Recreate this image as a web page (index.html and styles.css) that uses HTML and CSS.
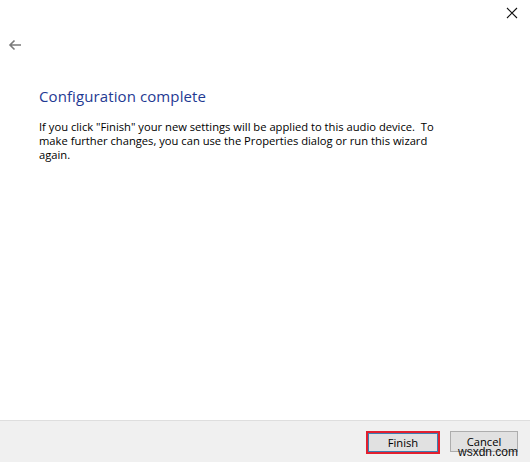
FILE: index.html
```html
<!DOCTYPE html>
<html lang="en">
<head>
    <meta charset="UTF-8">
    <title>Configuration complete</title>
    <link rel="stylesheet" href="styles.css">
</head>
<body>
    <div class="wizard">
        <div class="titlebar">
            <svg class="close" width="12" height="12" viewBox="0 0 12 12">
                <path d="M1 1 L11 11 M11 1 L1 11" stroke="#111" stroke-width="1.1" fill="none"/>
            </svg>
        </div>
        <div class="nav">
            <svg class="back" width="14" height="12" viewBox="0 0 14 12">
                <path d="M13 6 H2 M6.5 1.5 L2 6 L6.5 10.5" stroke="#7a7a7a" stroke-width="1.6" fill="none"/>
            </svg>
        </div>
        <div class="content">
            <h1>Configuration complete</h1>
            <p>If you click "Finish" your new settings will be applied to this audio device.&nbsp; To make further changes, you can use the Properties dialog or run this wizard again.</p>
        </div>
        <div class="footer">
            <div class="highlight">
                <button class="btn btn-default">Finish</button>
            </div>
            <button class="btn">Cancel</button>
            <span class="watermark">wsxdn.com</span>
        </div>
    </div>
</body>
</html>
```

FILE: styles.css
```css
body {
    margin: 0;
    font-family: 'Open Sans', 'Noto Sans', sans-serif;
    background: #fff;
}
.wizard {
    width: 530px;
    height: 462px;
    display: flex;
    flex-direction: column;
    overflow: hidden;
}
.titlebar {
    height: 30px;
    display: flex;
    justify-content: flex-end;
    align-items: flex-start;
}
.close {
    margin: 7px 12px 0 0;
}
.nav {
    height: 30px;
    padding-left: 8px;
}
.back {
    margin-top: 9px;
}
.content {
    flex: 1;
    padding: 26px 0 0 39px;
}
h1 {
    margin: 0;
    font-size: 15px;
    font-weight: normal;
    color: #1f3a93;
    letter-spacing: 0.1px;
}
p {
    margin: 14px 0 0;
    width: 420px;
    font-size: 11.2px;
    line-height: 14px;
    color: #000;
}
.footer {
    position: relative;
    height: 42px;
    background: #f0f0f0;
    border-top: 1px solid #dedede;
    display: flex;
    justify-content: flex-end;
    align-items: flex-start;
    gap: 10px;
    padding: 10px 12px 0 0;
    box-sizing: border-box;
}
.highlight {
    border: 2px solid #e2202f;
    display: flex;
}
.btn {
    width: 68px;
    height: 21px;
    background: #e1e1e1;
    border: 1px solid #adadad;
    font-family: inherit;
    font-size: 11.2px;
    color: #000;
    padding: 0;
}
.btn-default {
    width: 70px;
    height: 19px;
    border: 1px solid #3c7fb1;
}
.watermark {
    position: absolute;
    right: 12px;
    bottom: 3px;
    font-family: 'Liberation Sans', Arial, sans-serif;
    font-size: 12px;
    color: #111;
    line-height: 14px;
}
```
